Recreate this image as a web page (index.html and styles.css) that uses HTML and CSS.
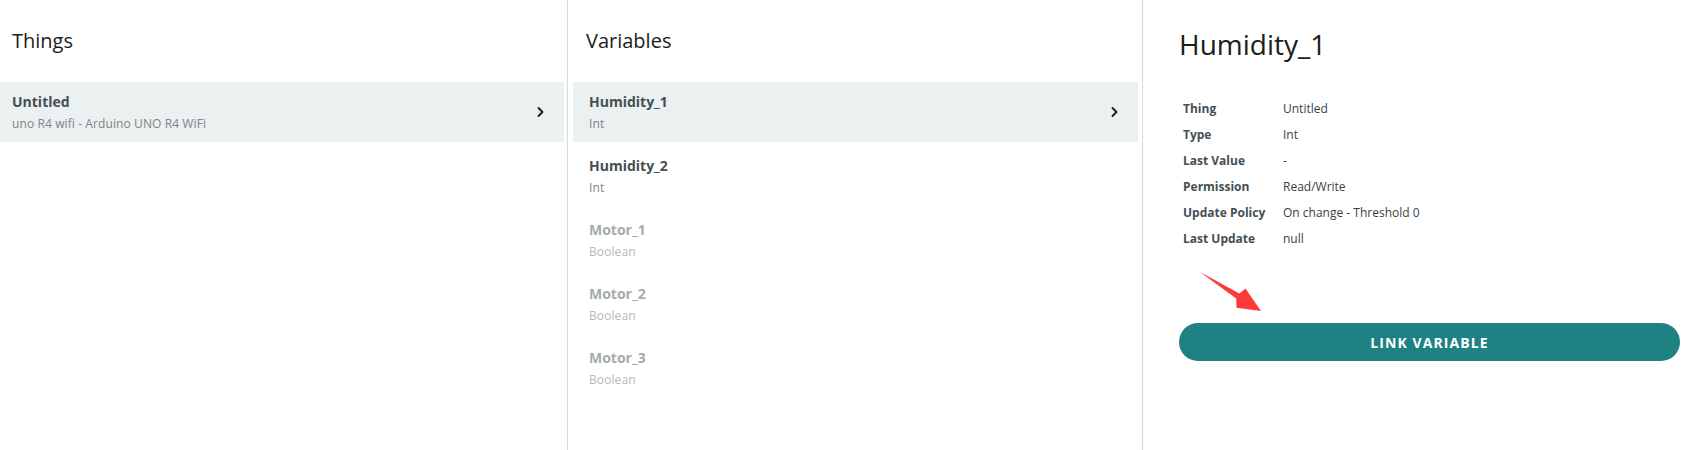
FILE: index.html
```html
<!DOCTYPE html>
<html lang="en">
<head>
<meta charset="utf-8">
<title>Link Variable</title>
<link rel="stylesheet" href="styles.css">
</head>
<body>
<div class="layout">
  <section class="col col-things">
    <h2 class="col-title">Things</h2>
    <ul class="list">
      <li class="item active">
        <div class="item-text">
          <div class="item-name">Untitled</div>
          <div class="item-sub">uno R4 wifi - Arduino UNO R4 WiFi</div>
        </div>
        <svg class="chev" width="8" height="12" viewBox="0 0 8 12"><path d="M1.5 2 L5.5 6 L1.5 10" fill="none" stroke="#1b1f20" stroke-width="1.9" stroke-linecap="round" stroke-linejoin="round"/></svg>
      </li>
    </ul>
  </section>

  <section class="col col-vars">
    <h2 class="col-title">Variables</h2>
    <ul class="list">
      <li class="item active">
        <div class="item-text">
          <div class="item-name">Humidity_1</div>
          <div class="item-sub">Int</div>
        </div>
        <svg class="chev" width="8" height="12" viewBox="0 0 8 12"><path d="M1.5 2 L5.5 6 L1.5 10" fill="none" stroke="#1b1f20" stroke-width="1.9" stroke-linecap="round" stroke-linejoin="round"/></svg>
      </li>
      <li class="item">
        <div class="item-text">
          <div class="item-name">Humidity_2</div>
          <div class="item-sub">Int</div>
        </div>
      </li>
      <li class="item disabled">
        <div class="item-text">
          <div class="item-name">Motor_1</div>
          <div class="item-sub">Boolean</div>
        </div>
      </li>
      <li class="item disabled">
        <div class="item-text">
          <div class="item-name">Motor_2</div>
          <div class="item-sub">Boolean</div>
        </div>
      </li>
      <li class="item disabled">
        <div class="item-text">
          <div class="item-name">Motor_3</div>
          <div class="item-sub">Boolean</div>
        </div>
      </li>
    </ul>
  </section>

  <section class="col col-detail">
    <h1 class="detail-title">Humidity_1</h1>
    <dl class="details">
      <dt>Thing</dt><dd>Untitled</dd>
      <dt>Type</dt><dd>Int</dd>
      <dt>Last Value</dt><dd>-</dd>
      <dt>Permission</dt><dd>Read/Write</dd>
      <dt>Update Policy</dt><dd>On change - Threshold 0</dd>
      <dt>Last Update</dt><dd>null</dd>
    </dl>
    <button class="link-btn" type="button">LINK VARIABLE</button>
    <svg class="annot-arrow" width="66" height="46" viewBox="55 268 66 46">
      <polygon points="57,272 96.4,293.6 102.5,288.5 118,311 93.5,307.8 93.2,298.4" fill="#fd3a3a"/>
    </svg>
  </section>
</div>
</body>
</html>
```

FILE: styles.css
```css
* {
  box-sizing: border-box;
}

html, body {
  margin: 0;
  padding: 0;
  background: #ffffff;
}

body {
  width: 1707px;
  height: 450px;
  overflow: hidden;
  font-family: "Open Sans", "Noto Sans", sans-serif;
  color: #434f54;
}

.layout {
  display: grid;
  grid-template-columns: 568px 575px 1fr;
  height: 450px;
}

.col {
  height: 450px;
  padding-top: 27px;
}

.col-things,
.col-vars {
  border-right: 1px solid #d3d9d9;
}

.col-title {
  margin: 0 0 27px 0;
  font-size: 20px;
  line-height: 28px;
  font-weight: 400;
  color: #1c1c1c;
}

.col-things .col-title {
  padding-left: 12px;
}

.col-vars .col-title {
  padding-left: 18px;
}

.list {
  list-style: none;
  margin: 0;
  padding: 0;
  display: flex;
  flex-direction: column;
  gap: 4px;
}

.item {
  display: flex;
  align-items: center;
  height: 60px;
  padding: 9px 0 7px 0;
}

.col-things .item {
  margin-right: 3px;
  padding-left: 12px;
}

.col-vars .item {
  margin: 0 4px 0 5px;
  padding-left: 16px;
}

.item.active {
  background: #ebf0f0;
}

.item-text {
  display: flex;
  flex-direction: column;
}

.item-name {
  font-size: 14px;
  line-height: 22px;
  font-weight: 700;
  color: #434f54;
}

.item-sub {
  font-size: 12px;
  line-height: 22px;
  letter-spacing: 0.1px;
  color: #7b8689;
}

.item.disabled .item-name {
  color: #a3abad;
}

.item.disabled .item-sub {
  color: #b4babb;
}

.chev {
  margin-left: auto;
  margin-right: 19px;
  margin-top: -2px;
}

.col-detail {
  position: relative;
  padding: 26px 27px 0 36px;
}

.detail-title {
  margin: 0;
  font-size: 28px;
  line-height: 36px;
  font-weight: 400;
  color: #1c1c1c;
}

.details {
  display: grid;
  grid-template-columns: 100px 1fr;
  grid-auto-rows: 26px;
  align-items: center;
  margin: 34px 0 0 4px;
  font-size: 12px;
  line-height: 16px;
}

.details dt {
  font-weight: 700;
  color: #434f54;
}

.details dd {
  margin: 0;
  color: #3a3f41;
}

.link-btn {
  display: block;
  width: 501px;
  height: 38px;
  margin-top: 71px;
  border: none;
  border-radius: 19px;
  background: #1f8282;
  color: #ffffff;
  font-family: "Open Sans", "Noto Sans", sans-serif;
  font-size: 14px;
  font-weight: 700;
  letter-spacing: 1.1px;
  padding: 0;
}

.annot-arrow {
  position: absolute;
  left: 55px;
  top: 268px;
  pointer-events: none;
}
```
